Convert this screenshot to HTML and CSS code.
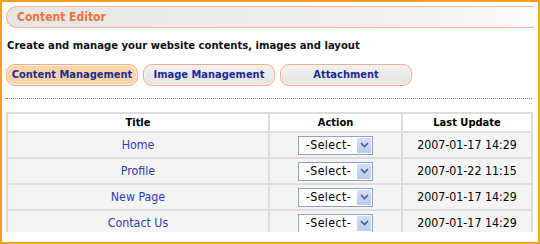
FILE: index.html
```html
<!DOCTYPE html>
<html lang="en">
<head>
  <meta charset="UTF-8">
  <title>Content Editor</title>
  <link rel="stylesheet" href="styles.css">
</head>
<body>
  <div class="frame">
    <div class="editor-header">Content Editor</div>
    <p class="intro">Create and manage your website contents, images and layout</p>

    <!-- Abas -->
    <div class="tabs">
      <div class="tab active">Content Management</div>
      <div class="tab">Image Management</div>
      <div class="tab">Attachment</div>
    </div>

    <div class="dotted"></div>

    <div class="table-wrap">
      <table class="pages">
        <thead>
          <tr>
            <th class="col-title">Title</th>
            <th class="col-action">Action</th>
            <th class="col-date">Last Update</th>
          </tr>
        </thead>
        <tbody>
          <tr>
            <td><a href="#">Home</a></td>
            <td><div class="select"><span class="select-text">-Select-</span><span class="select-arrow"><svg width="9" height="6" viewBox="0 0 9 6"><path d="M1 1 L4.5 4.5 L8 1" fill="none" stroke="#4a5f8a" stroke-width="1.6"/></svg></span></div></td>
            <td>2007-01-17 14:29</td>
          </tr>
          <tr>
            <td><a href="#">Profile</a></td>
            <td><div class="select"><span class="select-text">-Select-</span><span class="select-arrow"><svg width="9" height="6" viewBox="0 0 9 6"><path d="M1 1 L4.5 4.5 L8 1" fill="none" stroke="#4a5f8a" stroke-width="1.6"/></svg></span></div></td>
            <td>2007-01-22 11:15</td>
          </tr>
          <tr>
            <td><a href="#">New Page</a></td>
            <td><div class="select"><span class="select-text">-Select-</span><span class="select-arrow"><svg width="9" height="6" viewBox="0 0 9 6"><path d="M1 1 L4.5 4.5 L8 1" fill="none" stroke="#4a5f8a" stroke-width="1.6"/></svg></span></div></td>
            <td>2007-01-17 14:29</td>
          </tr>
          <tr>
            <td><a href="#">Contact Us</a></td>
            <td><div class="select"><span class="select-text">-Select-</span><span class="select-arrow"><svg width="9" height="6" viewBox="0 0 9 6"><path d="M1 1 L4.5 4.5 L8 1" fill="none" stroke="#4a5f8a" stroke-width="1.6"/></svg></span></div></td>
            <td>2007-01-17 14:29</td>
          </tr>
        </tbody>
      </table>
    </div>
  </div>
</body>
</html>
```

FILE: styles.css
```css
body {
  margin: 0;
  font-family: "DejaVu Sans Condensed", "DejaVu Sans", sans-serif;
  font-size: 12px;
  color: #000;
  background: #fff;
}

.frame {
  width: 540px;
  height: 244px;
  box-sizing: border-box;
  border: 2px solid #eda11c;
  padding: 4px;
  overflow: hidden;
}

.editor-header {
  height: 20px;
  line-height: 20px;
  padding-left: 10px;
  border: 1px solid #f7b39a;
  border-right: none;
  border-radius: 11px 0 0 11px;
  background: linear-gradient(to right, #e6e6e6, #efefef 70%, #fafafa);
  color: #f0703c;
  font-weight: bold;
  font-size: 12px;
}

.intro {
  margin: 11px 0 0 1px;
  line-height: 14px;
  font-weight: bold;
  font-size: 11.2px;
  color: #111;
}

.tabs {
  display: flex;
  gap: 5px;
  margin-top: 11px;
}

.tab {
  width: 130px;
  height: 20px;
  line-height: 20px;
  text-align: center;
  border: 1px solid #f5a888;
  border-radius: 9px;
  box-shadow: inset 0 0 0 1px #fff3ee;
  background: linear-gradient(#f0f0f0, #e3e3e3);
  color: #1c2a94;
  font-weight: bold;
  font-size: 11px;
}

.tab.active {
  background: #f9d4a8;
}

.dotted {
  margin: 12px 2px 0 0;
  border-top: 1px dotted #8a8a8a;
}

.table-wrap {
  margin-top: 13px;
  height: 120px;
  overflow: hidden;
}

.pages {
  border-collapse: collapse;
  margin-left: 0;
  width: 527px;
  table-layout: fixed;
}

.pages th,
.pages td {
  border: 2px solid #dcdcdc;
  text-align: center;
  padding: 0;
}

.pages th {
  height: 17px;
  background: #fff;
  font-size: 11px;
  font-weight: bold;
}

.pages td {
  height: 24px;
  background: #f4f4f4;
  font-size: 12.3px;
}

.col-title { width: 260px; }
.col-action { width: 131px; }

.pages a {
  color: #2c3fa8;
  text-decoration: none;
}

.select {
  display: inline-flex;
  align-items: center;
  width: 73px;
  height: 17px;
  border: 1px solid #8da2c2;
  background: #fff;
  vertical-align: middle;
}

.select-text {
  flex: 1;
  padding-left: 1px;
  text-align: center;
  font-size: 12.3px;
  letter-spacing: 0.4px;
}

.select-arrow {
  display: flex;
  align-items: center;
  justify-content: center;
  width: 14px;
  height: 15px;
  margin-right: 1px;
  background: linear-gradient(#d2def8, #b9cbf2);
  border-radius: 1px;
}
```
